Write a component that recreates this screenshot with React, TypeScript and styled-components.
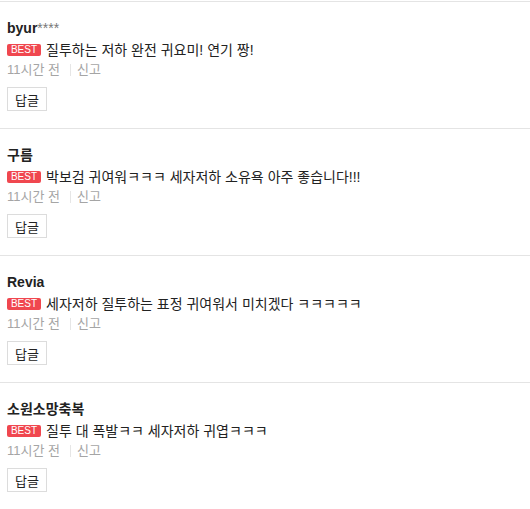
import styled, { createGlobalStyle } from "styled-components";

const GlobalStyle = createGlobalStyle`
  body {
    margin: 0;
    background: #fff;
    font-family: "Liberation Sans", "Noto Sans CJK KR", sans-serif;
    color: #222;
  }
`;

/* ===== LIST ===== */

const List = styled.ul`
  list-style: none;
  margin: 0;
  padding: 1px 0 0;
  width: 530px;
`;

const Item = styled.li`
  border-top: 1px solid #e4e4e4;
  padding: 17px 7px 17px;
`;

const Name = styled.div`
  font-size: 14px;
  line-height: 18px;
  font-weight: 700;
  color: #222;
`;

const Mask = styled.span`
  font-weight: 400;
  color: #777;
`;

const Body = styled.div`
  display: flex;
  align-items: center;
  gap: 5px;
  margin-top: 4px;
  font-size: 14px;
  line-height: 18px;
  color: #222;
`;

const Badge = styled.span`
  display: inline-flex;
  align-items: center;
  justify-content: center;
  flex: 0 0 auto;
  width: 34px;
  height: 12px;
  border-radius: 2px;
  background: #f0474f;
  color: #fff;
  font-size: 10px;
  line-height: 12px;
  font-family: "Liberation Sans", sans-serif;
`;

const Meta = styled.div`
  display: flex;
  align-items: center;
  margin-top: 2px;
  font-size: 13px;
  line-height: 18px;
  color: #a5a5a5;
`;

const Divider = styled.span`
  width: 1px;
  height: 12px;
  background: #e6e6e6;
  margin: 0 6px 0 10px;
`;

const ReplyButton = styled.button`
  margin-top: 8px;
  width: 40px;
  height: 24px;
  padding: 0;
  border: 1px solid #dcdcdc;
  background: #fff;
  color: #222;
  font-size: 13px;
  font-family: "Liberation Sans", "Noto Sans CJK KR", sans-serif;
  display: block;
`;

type Comment = {
  name: string;
  mask?: string;
  text: string;
};

const comments: Comment[] = [
  { name: "byur", mask: "****", text: "질투하는 저하 완전 귀요미! 연기 짱!" },
  { name: "구름", text: "박보검 귀여워ㅋㅋㅋ 세자저하 소유욕 아주 좋습니다!!!" },
  { name: "Revia", text: "세자저하 질투하는 표정 귀여워서 미치겠다 ㅋㅋㅋㅋㅋ" },
  { name: "소원소망축복", text: "질투 대 폭발ㅋㅋ 세자저하 귀엽ㅋㅋㅋ" },
];

export default function App() {
  return (
    <>
      <GlobalStyle />
      <List>
        {comments.map((c) => (
          <Item key={c.name}>
            <Name>
              {c.name}
              {c.mask && <Mask>{c.mask}</Mask>}
            </Name>
            <Body>
              <Badge>BEST</Badge>
              {c.text}
            </Body>
            <Meta>
              11시간 전
              <Divider />
              신고
            </Meta>
            <ReplyButton>답글</ReplyButton>
          </Item>
        ))}
      </List>
    </>
  );
}
